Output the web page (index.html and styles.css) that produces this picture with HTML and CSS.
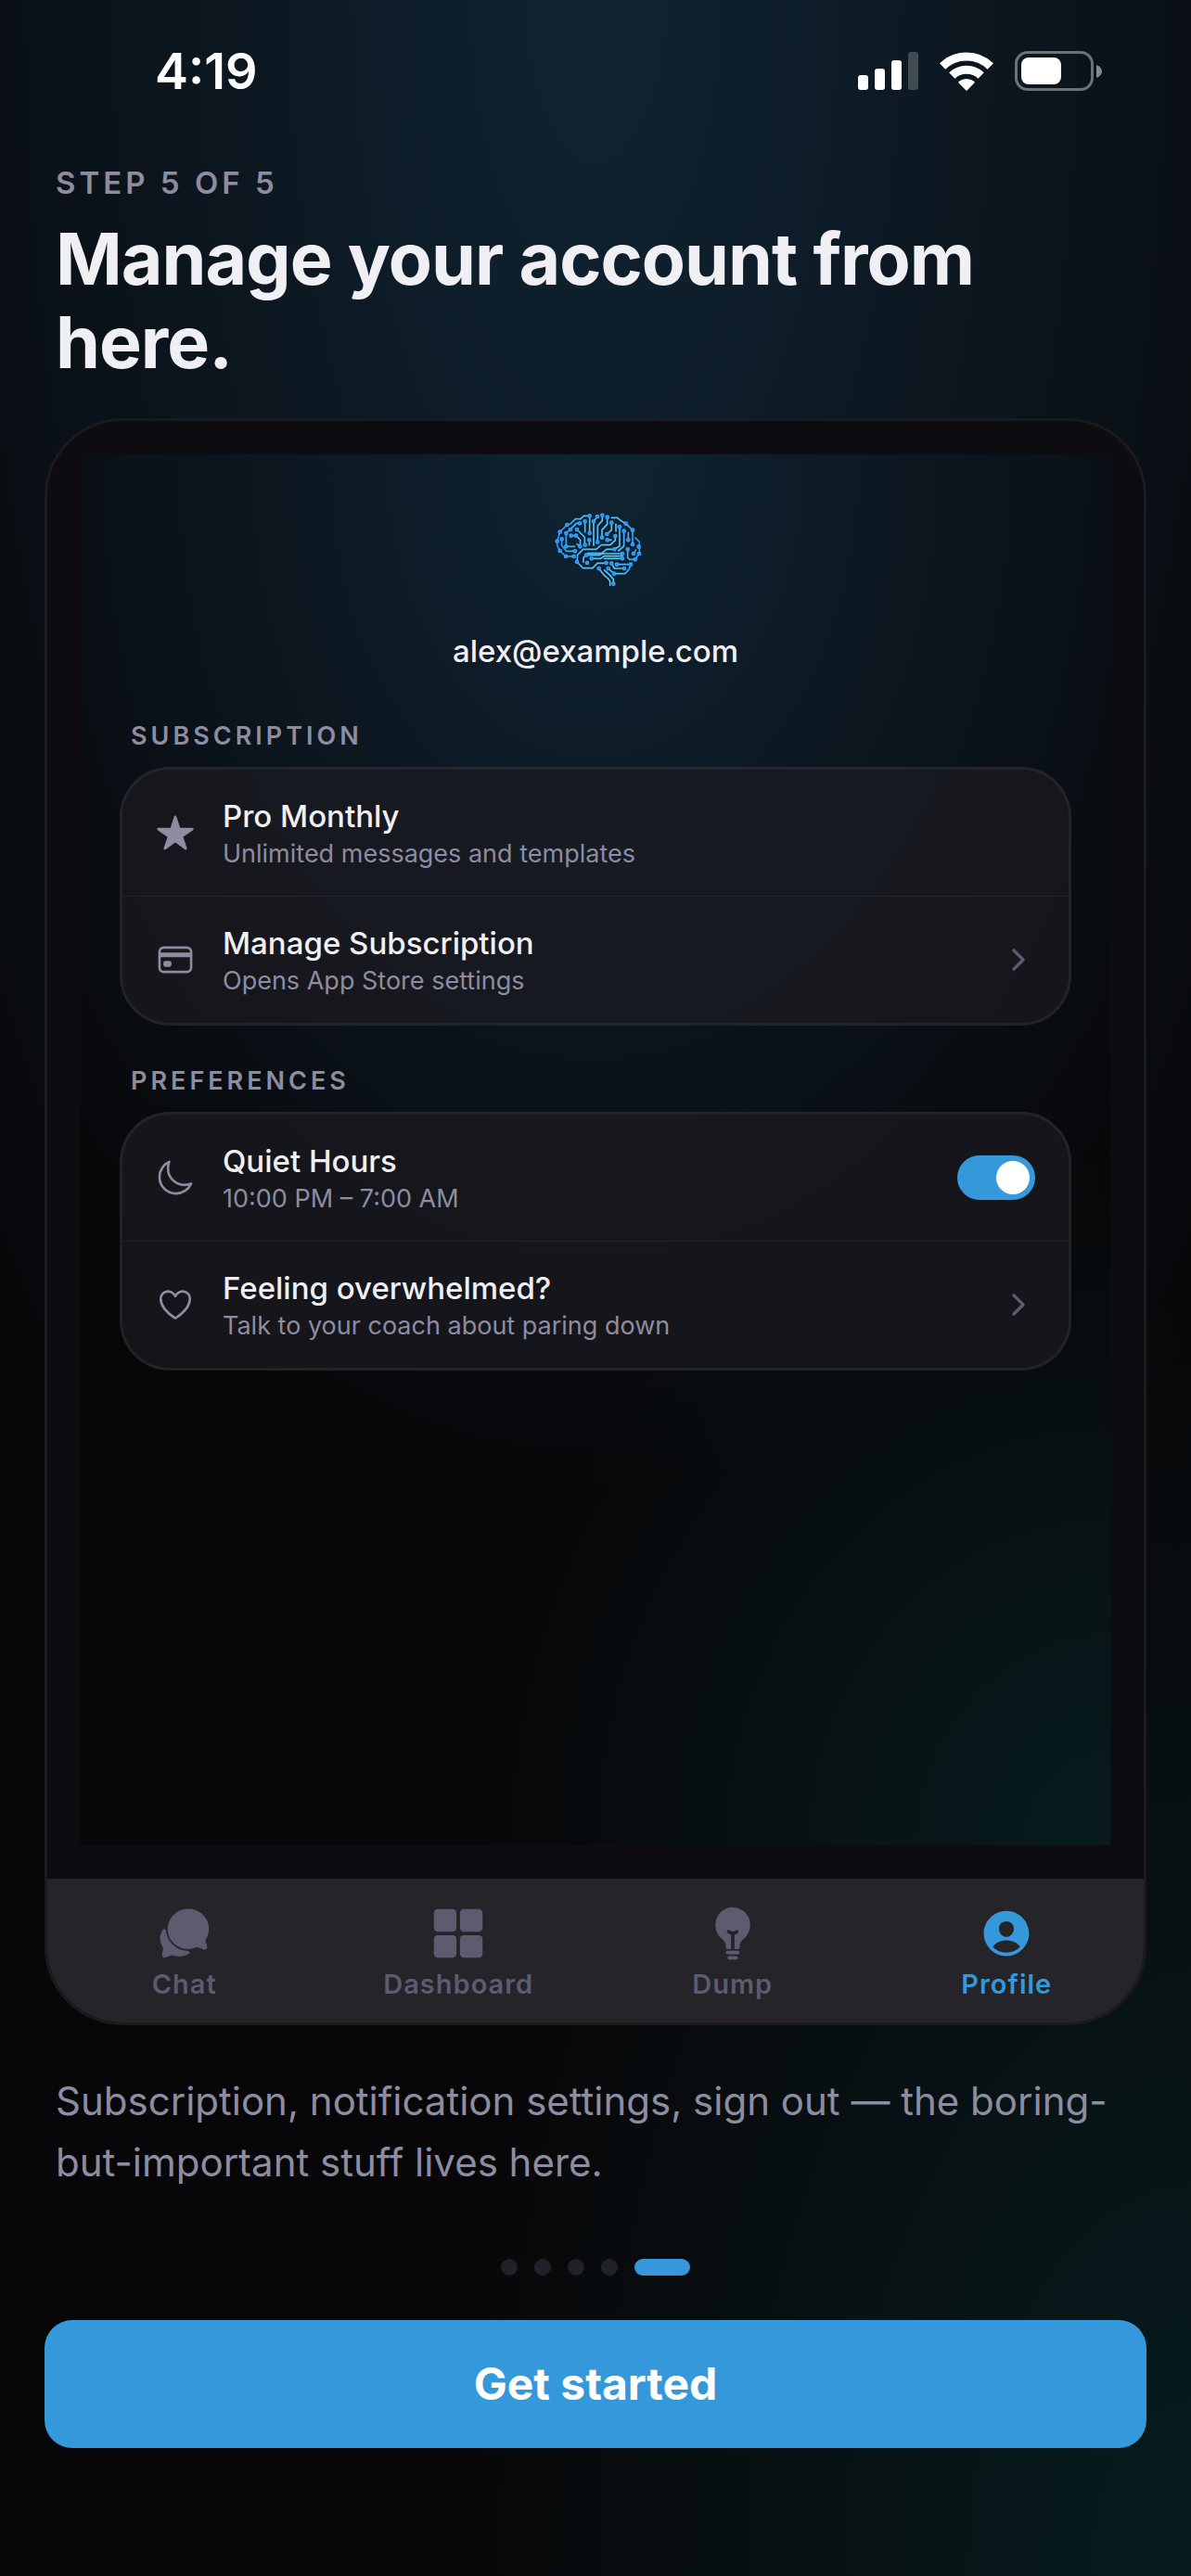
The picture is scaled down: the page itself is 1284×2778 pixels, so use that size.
FILE: index.html
```html
<!DOCTYPE html>
<html lang="en">
<head>
<meta charset="utf-8">
<meta name="viewport" content="width=device-width, initial-scale=1">
<title>Manage your account</title>
<link rel="stylesheet" href="styles.css">
</head>
<body>
<div class="page glow">
  <header class="status">
    <time class="clock">4:19</time>
    <div class="status-icons">
      <svg width="65" height="42" viewBox="0 0 65 42" fill="#fff" aria-label="Signal"><rect y="25" width="11" height="16" rx="3"/><rect x="18" y="18" width="11" height="23" rx="3"/><rect x="36" y="9" width="11" height="32" rx="3"/><rect x="54" width="11" height="41" rx="3" opacity=".22"/></svg>
      <svg width="58" height="42" viewBox="0 0 58 42" aria-label="Wi-Fi"><g fill="none" stroke="#fff" stroke-width="9"><path d="M3.200 15.600A37 37 0 0 1 54.800 15.600"/><path d="M13.300 25.500A22.600 22.600 0 0 1 44.700 25.500"/></g><path fill="#fff" d="M29 42l-8.400-8.500q-.8-.9.200-1.700a13.500 13.500 0 0 1 16.400 0q1 .8.200 1.700z"/></svg>
      <svg width="94" height="43" viewBox="0 0 94 43" aria-label="Battery"><rect x="1.500" y="1.500" width="82" height="40" rx="12.500" fill="none" stroke="#fff" stroke-opacity=".4" stroke-width="3"/><rect x="7" y="7" width="43" height="29" rx="8" fill="#fff"/><path d="M88 15c8 3 8 11 0 14z" fill="#fff" fill-opacity=".5"/></svg>
    </div>
  </header>

  <main class="main">
    <div class="intro">
      <p class="step">STEP 5 OF 5</p>
      <h1 class="title">Manage your account from here.</h1>
    </div>

    <section class="frame" aria-label="Profile preview">
      <div class="screen-wrap">
        <div class="screen glow">
          <svg class="brain" viewBox="66 36 360 360" aria-label="Logo">
            <defs><linearGradient id="wire" gradientUnits="userSpaceOnUse" x1="118" y1="0" x2="393" y2="0"><stop offset="0" stop-color="#2492fa"/><stop offset=".3" stop-color="#4fbdf6"/><stop offset=".7" stop-color="#5cc6f8"/><stop offset="1" stop-color="#2492fa"/></linearGradient></defs>
            <path fill="none" stroke="url(#wire)" stroke-width="5" stroke-linejoin="round" stroke-linecap="round" d="M227 109H208L198 119H181L165 135L154 138L131 161L122 191V205L131 222L150 240H176M137 184V205L151 223H180M195 133H184L151 165V208H179M165 153L181 137M186 153L211 178V203M167 173H183L197 187L196 208L186 200M212 127V162M227 109V165M226 187V204M240 127V205M252 111L240 127M268 107V124L253 141V194M284 113V136L267 154V179M298 131V154L283 168M298 115H317L326 123L344 134L366 155V201M312 136V158M324 144V207L307 217H282L266 230H222L207 244V259M338 158V207L320 222M352 163V187M375 180L388 193V231L374 250H356L350 244V217M369 231L377 219M284 187H297M310 174V188L294 203H265L248 217H206L188 235L186 258L206 278H237L252 262H281M216 236H258L270 231H333M233 247H263L274 239H333M274 247H333M298 263L307 279H339M315 266H360L355 281L342 296H306L287 279M257 279L275 302L285 310L293 320V334M275 285L290 298L304 314V329"/>
            <g class="nodes"><circle cx="227" cy="109" r="5"/><circle cx="252" cy="111" r="5"/><circle cx="268" cy="107" r="5"/><circle cx="284" cy="113" r="5"/><circle cx="154" cy="138" r="5"/><circle cx="195" cy="133" r="5"/><circle cx="212" cy="127" r="5"/><circle cx="240" cy="127" r="5"/><circle cx="298" cy="131" r="5"/><circle cx="344" cy="134" r="5"/><circle cx="131" cy="161" r="5"/><circle cx="165" cy="153" r="5"/><circle cx="186" cy="153" r="5"/><circle cx="324" cy="144" r="5"/><circle cx="338" cy="158" r="5"/><circle cx="366" cy="155" r="5"/><circle cx="122" cy="191" r="5"/><circle cx="137" cy="184" r="5"/><circle cx="151" cy="165" r="5"/><circle cx="167" cy="173" r="5"/><circle cx="183" cy="173" r="5"/><circle cx="227" cy="165" r="5"/><circle cx="226" cy="187" r="5"/><circle cx="253" cy="194" r="5"/><circle cx="267" cy="179" r="5"/><circle cx="283" cy="168" r="5"/><circle cx="284" cy="187" r="5"/><circle cx="310" cy="174" r="5"/><circle cx="352" cy="187" r="5"/><circle cx="366" cy="201" r="5"/><circle cx="386" cy="209" r="5"/><circle cx="196" cy="208" r="5"/><circle cx="212" cy="203" r="5"/><circle cx="131" cy="222" r="5"/><circle cx="151" cy="208" r="5"/><circle cx="180" cy="223" r="5"/><circle cx="150" cy="240" r="5"/><circle cx="176" cy="240" r="5"/><circle cx="186" cy="258" r="5"/><circle cx="216" cy="236" r="5"/><circle cx="233" cy="247" r="5"/><circle cx="219" cy="261" r="5"/><circle cx="307" cy="217" r="5"/><circle cx="333" cy="231" r="5"/><circle cx="333" cy="247" r="5"/><circle cx="350" cy="217" r="5"/><circle cx="369" cy="231" r="5"/><circle cx="387" cy="231" r="5"/><circle cx="374" cy="250" r="5"/><circle cx="281" cy="261" r="5"/><circle cx="298" cy="263" r="5"/><circle cx="315" cy="266" r="5"/><circle cx="360" cy="266" r="5"/><circle cx="257" cy="279" r="5"/><circle cx="287" cy="279" r="5"/><circle cx="339" cy="279" r="5"/><circle cx="306" cy="296" r="5"/><circle cx="304" cy="329" r="5"/></g>
          </svg>
          <p class="email">alex@example.com</p>

          <h2 class="group-title">SUBSCRIPTION</h2>
          <div class="card">
            <div class="row">
              <svg class="icon" viewBox="0 0 512 512" fill="currentColor" aria-hidden="true"><path d="M394 480a16 16 0 01-9.390-3L256 383.760 127.390 477a16 16 0 01-24.550-18.080L153 310.350 23 221.200a16 16 0 019-29.200h160.380l48.400-148.950a16 16 0 0130.440 0l48.400 149H480a16 16 0 019.050 29.200L359 310.350l50.130 148.530A16 16 0 01394 480z"/></svg>
              <div class="row-text"><span class="row-title">Pro Monthly</span><span class="row-sub">Unlimited messages and templates</span></div>
            </div>
            <a class="row" href="#subscription">
              <svg class="icon" viewBox="0 0 512 512" fill="none" stroke="currentColor" stroke-linejoin="round" aria-hidden="true"><rect x="48" y="96" width="416" height="320" rx="56" stroke-width="32"/><path d="M48 192h416M128 300h48v20h-48z" stroke-width="60"/></svg>
              <span class="row-text"><span class="row-title">Manage Subscription</span><span class="row-sub">Opens App Store settings</span></span>
              <svg class="chevron" viewBox="0 0 512 512" aria-hidden="true"><path d="M184 112l144 144-144 144"/></svg>
            </a>
          </div>

          <h2 class="group-title group-next">PREFERENCES</h2>
          <div class="card">
            <label class="row">
              <svg class="icon line" viewBox="0 0 512 512" aria-hidden="true"><path d="M160 136c0-30.620 4.510-61.610 16-88C99.570 81.270 48 159.320 48 248c0 119.290 96.710 216 216 216 88.680 0 166.730-51.570 200-128-26.390 11.490-57.380 16-88 16-119.290 0-216-96.710-216-216z"/></svg>
              <span class="row-text"><span class="row-title">Quiet Hours</span><span class="row-sub">10:00 PM – 7:00 AM</span></span>
              <input class="toggle" type="checkbox" role="switch" checked>
            </label>
            <a class="row" href="#coach">
              <svg class="icon line" viewBox="0 0 512 512" aria-hidden="true"><path d="M352.920 80C288 80 256 144 256 144s-32-64-96.920-64c-52.760 0-94.540 44.140-95.080 96.810-1.100 109.330 86.730 187.080 183 252.420a16 16 0 0018 0c96.260-65.340 184.090-143.090 183-252.420-.54-52.670-42.320-96.810-95.080-96.810z"/></svg>
              <span class="row-text"><span class="row-title">Feeling overwhelmed?</span><span class="row-sub">Talk to your coach about paring down</span></span>
              <svg class="chevron" viewBox="0 0 512 512" aria-hidden="true"><path d="M184 112l144 144-144 144"/></svg>
            </a>
          </div>
        </div>
      </div>

      <nav class="tabs" aria-label="Tabs">
        <a class="tab" href="#chat">
          <svg viewBox="0 0 512 512" aria-hidden="true"><path d="M439.900 405.600a26.770 26.770 0 01-9.590-2l-56.780-20.130-.42-.17a9.880 9.880 0 00-3.910-.76 10.320 10.320 0 00-3.620.66c-1.380.52-13.810 5.190-26.850 8.770-7.070 1.940-31.680 8.270-51.430 8.270-50.480 0-97.680-19.400-132.890-54.630A183.380 183.380 0 01100.300 215.100a175.900 175.900 0 014.060-37.580c8.790-40.620 32.070-77.570 65.550-104A194.760 194.760 0 01290.300 30.400c52.210 0 100.860 20 137 56.180 34.160 34.270 52.880 79.330 52.730 126.870a177.860 177.860 0 01-30.300 99.150l-.19.280-.74 1c-.17.230-.34.450-.5.680l-.15.270a21.630 21.630 0 00-1.080 2.090l15.740 55.940a26.420 26.420 0 011.120 7.430 24 24 0 01-24.180 25.510z"/><path d="M299.870 425.390a15.740 15.740 0 00-10.290-8.100c-5.780-1.530-12.520-1.270-17.670-1.650a201.780 201.780 0 01-128.820-58.750A199.210 199.210 0 0186.400 244.160C85 234.420 85 232 85 232a16 16 0 00-28-10.580s-7.880 8.580-11.600 17.190a162.090 162.090 0 0011 150.060C59 393 59 395 58.420 399.500c-2.730 14.110-7.510 39-10 51.910a24 24 0 008 22.920l.46.390A24.340 24.340 0 0072 480a23.420 23.420 0 009-1.790l53.510-20.650a8.050 8.050 0 015.720 0c21.070 7.840 43 12 63.780 12a176 176 0 0074.910-16.660c5.460-2.560 14-5.340 19-11.120a15 15 0 001.950-16.390z"/></svg>
          <span>Chat</span>
        </a>
        <a class="tab" href="#dashboard">
          <svg viewBox="0 0 512 512" aria-hidden="true"><rect x="32" y="32" width="208" height="208" rx="36"/><rect x="272" y="32" width="208" height="208" rx="36"/><rect x="32" y="272" width="208" height="208" rx="36"/><rect x="272" y="272" width="208" height="208" rx="36"/></svg>
          <span>Dashboard</span>
        </a>
        <a class="tab" href="#dump">
          <svg viewBox="0 0 512 512" aria-hidden="true"><path d="M288 464h-64a16 16 0 000 32h64a16 16 0 000-32zM304 416h-96a16 16 0 000 32h96a16 16 0 000-32zM369.420 62.690C339.350 32.580 299.070 16 256 16A159.620 159.620 0 0096 176c0 46.620 17.870 90.230 49 119.640l4.360 4.090C167.370 316.570 192 339.640 192 360v24a16 16 0 0016 16h24a8 8 0 008-8V274.820a8 8 0 00-5.130-7.470A130.730 130.730 0 01208.710 253 16 16 0 11227.290 227c7.400 5.240 21.650 13 28.710 13s21.330-7.780 28.730-13a16 16 0 0118.560 26 130.730 130.730 0 01-26.160 14.320 8 8 0 00-5.130 7.470V392a8 8 0 008 8h24a16 16 0 0016-16v-24c0-19.880 24.360-42.930 42-60.070l4.690-4.430C398.470 264.940 416 223.310 416 176a159.160 159.160 0 00-46.580-113.310z"/></svg>
          <span>Dump</span>
        </a>
        <a class="tab active" href="#profile" aria-current="page">
          <svg viewBox="0 0 512 512" aria-hidden="true"><path fill-rule="evenodd" d="M256 48C141.310 48 48 141.310 48 256s93.310 208 208 208 208-93.310 208-208S370.690 48 256 48zm-50.220 116.820C218.450 151.390 236.280 144 256 144s37.390 7.440 50.110 20.940c12.890 13.680 19.160 32.060 17.680 51.820C320.830 256 290.430 288 256 288s-64.890-32-67.790-71.250c-1.470-19.920 4.790-38.360 17.570-51.930zM256 432a175.490 175.490 0 01-126-53.220 122.910 122.910 0 0135.140-33.440C190.630 329 222.890 320 256 320s65.370 9 90.830 25.340A122.870 122.870 0 01382 378.780 175.450 175.450 0 01256 432z"/></svg>
          <span>Profile</span>
        </a>
      </nav>
    </section>

    <p class="caption">Subscription, notification settings, sign out — the boring-but-important stuff lives here.</p>
    <div class="dots" role="img" aria-label="Step 5 of 5"><i></i><i></i><i></i><i></i><i class="on"></i></div>
    <button class="cta" type="button">Get started</button>
  </main>
</div>
</body>
</html>
```

FILE: styles.css
```css
* { box-sizing: border-box; }

body, p, h1, h2 { margin: 0; }

body {
  background: #070709;
  color: #f0eff4;
  font-family: Inter, "Noto Sans", sans-serif;
}

a { color: inherit; text-decoration: none; }

.glow {
  background:
    radial-gradient(ellipse 70% 75% at 50% 0%, rgba(52, 152, 219, 0.2), rgba(52, 152, 219, 0) 100%),
    radial-gradient(ellipse 62% 50% at 100% 100%, rgba(10, 180, 180, 0.12), rgba(10, 180, 180, 0) 100%),
    #070709;
}

.page {
  min-height: 100vh;
  display: flex;
  flex-direction: column;
}

.status {
  height: 153px;
  padding: 0 96px 0 167px;
  display: flex;
  align-items: center;
  justify-content: space-between;
  color: #fff;
}

.clock { font-size: 54px; font-weight: 600; line-height: 60px; }

.status-icons { display: flex; align-items: center; gap: 23px; }

.main {
  flex: 1;
  display: flex;
  flex-direction: column;
  padding: 24px 48px 138px;
}

.intro { padding: 0 12px; margin-bottom: 37px; }

.step {
  margin-bottom: 17px;
  color: #8e8ca0;
  font-size: 33px;
  font-weight: 600;
  line-height: 40px;
  letter-spacing: 4px;
}

.title {
  font-size: 77px;
  font-weight: 700;
  line-height: 90px;
  letter-spacing: -1px;
}

.frame {
  flex: 1;
  display: flex;
  flex-direction: column;
  overflow: hidden;
  border: 3px solid #1b1a1f;
  border-radius: 84px;
  background: #0d0c11;
}

.screen-wrap {
  flex: 1;
  display: flex;
  padding: 36px;
}

.screen { flex: 1; padding: 42px 42px 0; }

.brain {
  display: block;
  width: 120px;
  height: 120px;
  margin: 0 auto 30px;
}

.nodes { fill: #1b84f5; stroke: #3ba6ff; stroke-width: 4px; }

.email {
  margin-bottom: 55px;
  font-size: 33px;
  font-weight: 500;
  line-height: 40px;
  text-align: center;
}

.group-title {
  padding: 0 12px;
  margin-bottom: 16px;
  color: #8e8ca0;
  font-size: 27px;
  font-weight: 600;
  line-height: 34px;
  letter-spacing: 4px;
}

.group-next { margin-top: 43px; }

.card {
  overflow: hidden;
  border: 3px solid rgba(255, 255, 255, 0.06);
  border-radius: 54px;
  background: rgba(27, 27, 33, 0.7);
}

.row {
  display: flex;
  align-items: center;
  gap: 30px;
  padding: 29px 36px;
}

.row + .row { border-top: 1px solid #232328; }

.icon { flex: none; width: 42px; height: 42px; color: #8e8ca0; }

.line { fill: none; stroke: currentColor; stroke-width: 32px; stroke-linejoin: round; }

.row-text {
  flex: 1;
  display: flex;
  flex-direction: column;
  gap: 3px;
}

.row-title { font-size: 33px; font-weight: 500; line-height: 42px; }

.row-sub { color: #8e8ca0; font-size: 27px; line-height: 33px; }

.chevron {
  flex: none;
  width: 36px;
  height: 36px;
  fill: none;
  stroke: #5c5b70;
  stroke-width: 48px;
  stroke-linecap: round;
  stroke-linejoin: round;
}

.toggle {
  appearance: none;
  flex: none;
  display: flex;
  width: 84px;
  height: 48px;
  margin: 0;
  padding: 6px;
  border-radius: 24px;
  background: #3a3a44;
}

.toggle::before {
  content: "";
  width: 36px;
  height: 36px;
  border-radius: 50%;
  background: #fff;
}

.toggle:checked { justify-content: flex-end; background: #3498db; }

.tabs { display: flex; background: #252429; }

.tab {
  flex: 1;
  display: flex;
  flex-direction: column;
  align-items: center;
  gap: 7px;
  padding: 29px 0 23px;
  color: #5c5b70;
  font-size: 29px;
  font-weight: 600;
  line-height: 36px;
  letter-spacing: 1px;
}

.tab svg { width: 60px; height: 60px; fill: currentColor; }

.active { color: #3498db; }

.caption {
  margin: 49px 0 71px;
  padding: 0 12px;
  color: #8e8ca0;
  font-size: 42px;
  line-height: 66px;
}

.dots {
  display: flex;
  justify-content: center;
  gap: 18px;
  margin-bottom: 48px;
}

.dots i { width: 18px; height: 18px; border-radius: 9px; background: #22212a; }

.dots .on { width: 60px; background: #3498db; }

.cta {
  padding: 39px;
  border: 0;
  border-radius: 30px;
  background: #3498db;
  color: #fff;
  font-family: inherit;
  font-size: 48px;
  font-weight: 700;
  line-height: 60px;
}
```
